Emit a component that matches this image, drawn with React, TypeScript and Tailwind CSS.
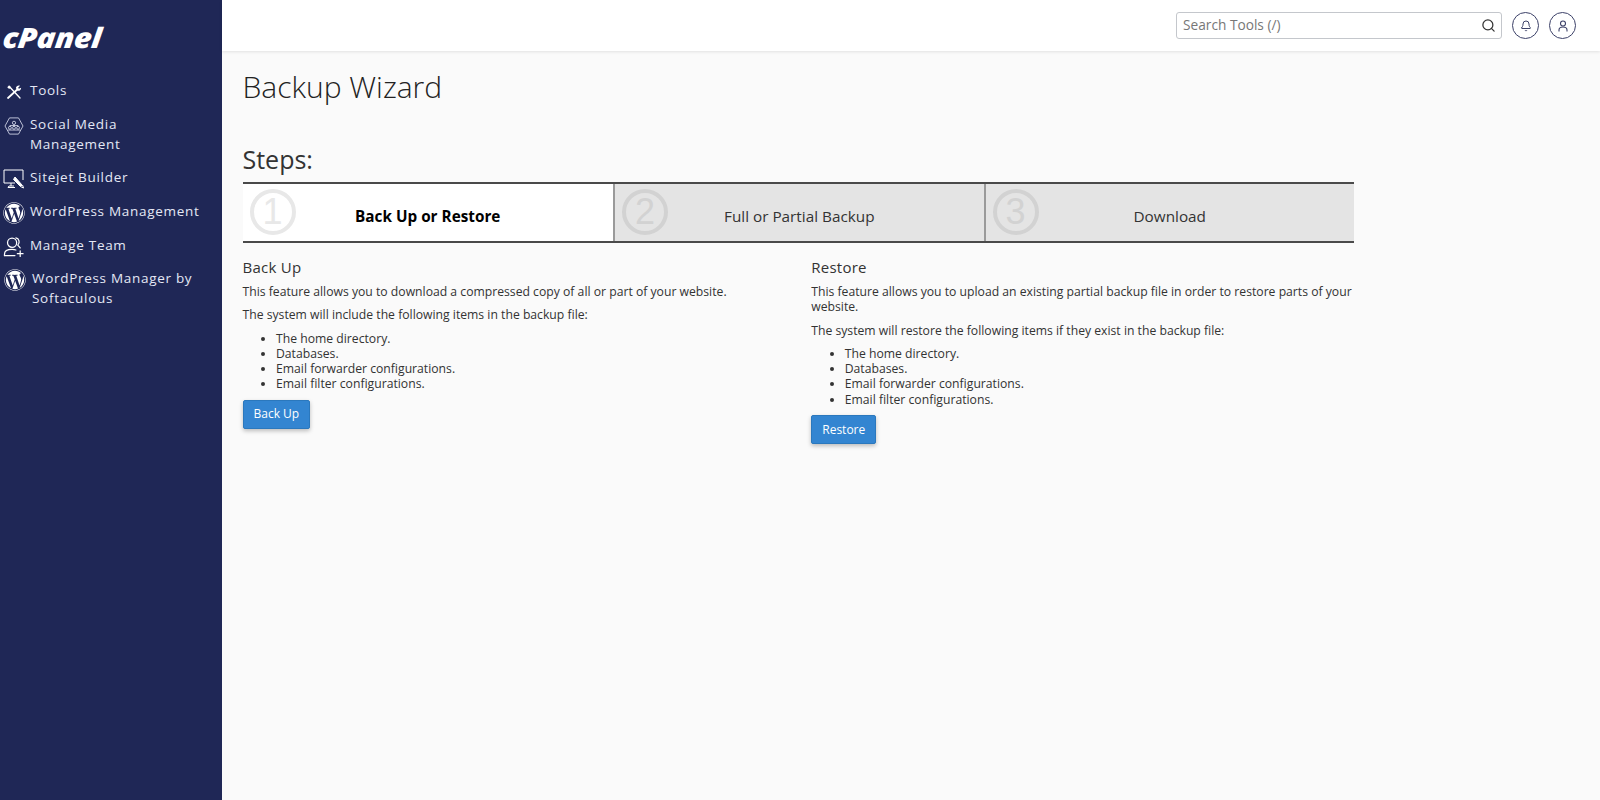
import { Bell, Search } from "lucide-react";
import { FaWordpress } from "react-icons/fa";

const ToolsIcon = () => (
  <svg width="18" height="18" viewBox="0 0 24 24" fill="none" stroke="#fff" strokeWidth="1.800" strokeLinecap="round">
    <path d="M6 5l14 15" />
    <path d="M3 5.500L5.500 3l2.500 2.500-2.500 2.500z" fill="#fff" stroke="none" />
    <path d="M16 9L4 20" strokeWidth="2.400" />
    <path d="M14.500 6.500c.5-2.500 3-4 5.500-3l-2.500 2.700 1 1.500 3-1.500c.2 2.800-2.500 4.800-5 4z" fill="#fff" stroke="none" />
  </svg>
);

const SocialIcon = () => (
  <svg width="22" height="18" viewBox="0 0 22 20" fill="none" stroke="#dfe3f3" strokeWidth="0.900">
    <path d="M6 1h10l5 9-5 9H6l-5-9z" />
    <circle cx="11" cy="6.500" r="1.800" />
    <circle cx="6.500" cy="12" r="1.600" />
    <circle cx="11" cy="12" r="1.600" />
    <circle cx="15.500" cy="12" r="1.600" />
    <path d="M11 8.300v2M6.500 10.400V9.500h9v.9M4 14.500h14" />
  </svg>
);

const SitejetIcon = () => (
  <svg width="22" height="20" viewBox="0 0 22 20" fill="none" stroke="#fff" strokeWidth="1">
    <path d="M12 14H1V1h19v10" />
    <path d="M8 14v3M5 18.500h7M5 18.500l1-1.500h5" />
    <path d="M12 8l7 8-1.500 1.500-7-7z" fill="#fff" />
    <path d="M17.500 17.500l3 1.500-1-3" />
  </svg>
);

const TeamIcon = () => (
  <svg width="22" height="20" viewBox="0 0 22 21" fill="none" stroke="#fff" strokeWidth="1.300" strokeLinecap="round">
    <circle cx="9" cy="6" r="4.800" />
    <path d="M13 1c3.500.5 4.500 5 2 7.500l2.500 3" />
    <path d="M1 19.500V18c0-3.500 3-5 8-5 1.500 0 3 .2 4 .6" />
    <path d="M1 19.500h11M17.500 14.500v6M14.500 17.500h6" />
  </svg>
);

const WpIcon = () => (
  <span className="flex h-[22px] w-[22px] items-center justify-center text-white">
    <FaWordpress size={22} />
  </span>
);

const navItems = [
  { label: "Tools", icon: <ToolsIcon />, gap: "gap-[5px]", pad: "pl-[3px]" },
  { label: "Social Media Management", icon: <SocialIcon />, gap: "gap-[5px]", pad: "pl-[3px]" },
  { label: "Sitejet Builder", icon: <SitejetIcon />, gap: "gap-[5px]", pad: "pl-[3px]" },
  { label: "WordPress Management", icon: <WpIcon />, gap: "gap-[5px]", pad: "pl-[3px]" },
  { label: "Manage Team", icon: <TeamIcon />, gap: "gap-[5px]", pad: "pl-[3px]" },
  { label: "WordPress Manager by Softaculous", icon: <WpIcon />, gap: "gap-[6px]", pad: "pl-[4px]" },
];

const steps = [
  { num: "1", label: "Back Up or Restore", active: true },
  { num: "2", label: "Full or Partial Backup", active: false },
  { num: "3", label: "Download", active: false },
];

const items = ["The home directory.", "Databases.", "Email forwarder configurations.", "Email filter configurations."];

const Column: React.FC<{ title: string; intro: string; lead: string; button: string }> = ({ title, intro, lead, button }) => (
  <div>
    <h3 className="text-[15px] leading-[22px] tracking-[0.25px] text-[#333]">{title}</h3>
    <p className="mt-[6px] text-[12.200px] leading-[15.300px] text-[#333]">{intro}</p>
    <p className="mt-[8px] text-[12.200px] leading-[15.300px] text-[#333]">{lead}</p>
    <ul className="mt-[8px] list-disc pl-[33.500px] text-[12.200px] leading-[15.300px] text-[#333]">
      {items.map((item) => (
        <li key={item}>{item}</li>
      ))}
    </ul>
    <button className="mt-[8px] h-[29px] rounded-[2px] border border-[#2b78bd] bg-[#3385d1] px-[10px] text-[12px] text-white shadow-[0_2px_4px_rgba(0,0,0,0.25)]">
      {button}
    </button>
  </div>
);

export default function App() {
  return (
    <div className="flex h-screen overflow-hidden bg-[#fafafa] font-['Open_Sans',sans-serif] text-[#333]">
      <aside className="w-[222px] shrink-0 bg-[#1f2756] text-[#e4e7f5]">
        <div className="flex h-[73px] items-start pl-[3px] pt-[19px]">
          <span className="origin-left -skew-x-6 scale-x-[1.1] text-[28px] font-extrabold italic leading-[36px] tracking-[-0.3px] text-white">
            cPanel
          </span>
        </div>
        <nav>
          {navItems.map((item) => (
            <div key={item.label} className={`flex items-start py-[6.850px] pr-[12px] ${item.gap} ${item.pad}`}>
              <span className="flex h-[20px] w-[22px] shrink-0 translate-y-[2px] items-center justify-center">{item.icon}</span>
              <span className="text-[13.500px] leading-[20px] tracking-[0.7px]">{item.label}</span>
            </div>
          ))}
        </nav>
      </aside>

      <div className="flex min-w-0 flex-1 flex-col">
        <header className="relative flex h-[51px] shrink-0 items-center justify-end gap-[10px] bg-white pr-[24px] shadow-[0_1px_3px_rgba(0,0,0,0.1)]">
          <div className="flex h-[27px] w-[326.500px] items-center rounded-[3px] border border-[#c4c7cc] bg-white pl-[6.500px] pr-[5px]">
            <span className="flex-1 text-[13.700px] text-[#777]">Search Tools (/)</span>
            <Search size={15} strokeWidth={2} className="text-[#333]" />
          </div>
          <div className="flex h-[27px] w-[27px] items-center justify-center rounded-full border border-[#3c4168] text-[#3c4168]">
            <Bell size={12} />
          </div>
          <div className="flex h-[27px] w-[27px] items-center justify-center rounded-full border border-[#3c4168]">
            <svg width="12" height="12" viewBox="0 0 12 12" fill="none" stroke="#3c4168" strokeWidth="1.100">
              <circle cx="6" cy="3.500" r="2.500" />
              <path d="M2 11.500V10c0-2 1.500-3 4-3s4 1 4 3v1.500" />
            </svg>
          </div>
        </header>

        <main className="ml-[20.500px] w-[1111.500px]">
          <h1 className="mt-[12px] text-[30px] font-light leading-[48px] text-[#222]">Backup Wizard</h1>
          <h2 className="mt-[30px] text-[25px] leading-[36px] text-[#333]">Steps:</h2>
          <div className="mt-[5px] grid grid-cols-3 border-y-2 border-y-[#4a4a4a]">
            {steps.map((step, i) => (
              <div
                key={step.num}
                className={`relative flex h-[57px] items-center justify-center pt-[7px] text-[15.300px] ${
                  step.active ? "bg-white font-bold text-black" : "bg-[#e4e4e4] text-[#333]"
                } ${i > 0 ? "border-l-2 border-l-[#9a9a9a]" : ""}`}
              >
                <span
                  className={`absolute left-[7px] top-[5px] flex h-[46px] w-[46px] items-center justify-center rounded-full border-[4px] font-['Liberation_Sans',sans-serif] text-[36px] font-normal leading-none ${
                    step.active ? "border-[#e8e8e8] text-[#e8e8e8]" : "border-[#d2d2d2] text-[#d2d2d2]"
                  }`}
                >
                  {step.num}
                </span>
                {step.label}
              </div>
            ))}
          </div>
          <div className="mt-[13px] grid grid-cols-2 gap-[26px]">
            <Column
              title="Back Up"
              intro="This feature allows you to download a compressed copy of all or part of your website."
              lead="The system will include the following items in the backup file:"
              button="Back Up"
            />
            <Column
              title="Restore"
              intro="This feature allows you to upload an existing partial backup file in order to restore parts of your website."
              lead="The system will restore the following items if they exist in the backup file:"
              button="Restore"
            />
          </div>
        </main>
      </div>
    </div>
  );
}
